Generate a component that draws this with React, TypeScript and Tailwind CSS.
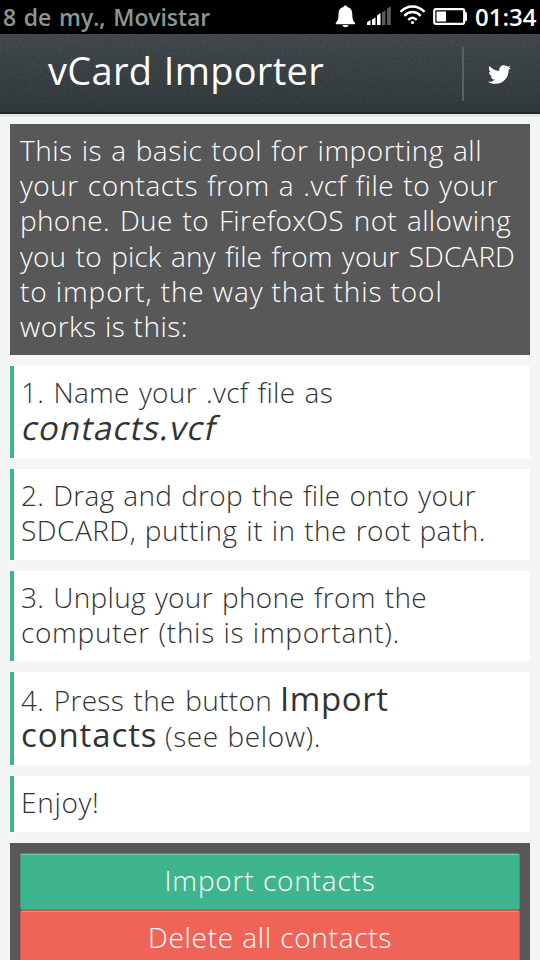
import type { ReactNode } from "react";
import { FaTwitter } from "react-icons/fa";

function Line({ className = "", children }: { className?: string; children: ReactNode }) {
  return (
    <span className={`block h-[35.2px] whitespace-nowrap [text-align-last:justify] ${className}`}>
      {children}
    </span>
  );
}

function Step({ className, children }: { className: string; children: ReactNode }) {
  return (
    <li className={`border-l-4 border-[#3fb58e] bg-white pl-[7px] pt-[9px] text-[#333333] shadow-[0_1px_0_#f8f9f9] ${className}`}>
      {children}
    </li>
  );
}

function StatusBar() {
  return (
    <div className="flex h-[34px] shrink-0 items-center bg-black font-semibold">
      <span className="ml-[3px] w-[207px] whitespace-nowrap text-[23px] leading-[32px] tracking-[-0.1px] text-[#8b9696] [text-align-last:justify]">
        8 de my., Movistar
      </span>
      <svg className="ml-[124px]" width="98" height="34" viewBox="334 0 98 34">
        <path d="M345.400 5.500c-1 0-1.700.6-1.900 1.500-3.800.9-5 3.800-5 7.500 0 4-.6 6-2.300 7.800-.8.800-.8 2 .4 2h17.600c1.200 0 1.200-1.200.4-2-1.700-1.800-2.300-3.800-2.300-7.800 0-3.700-1.200-6.600-5-7.500-.2-.9-.9-1.500-1.900-1.500z" fill="#fff" />
        <path d="M342.500 25h6c-.4 1.500-1.600 2.200-3 2.200s-2.600-.7-3-2.200z" fill="#fff" />
        <path d="M367 22.200l3.500-2.200v5H367zM372 19.600l3.500-2.200V25H372zM377 15.500l3.500-2.500V25H377z" fill="#fff" />
        <path d="M382 12.500l3.500-2.300V25H382zM387 8.700l3.800-2.500V25H387z" fill="#5a5a5a" />
        <g fill="none" stroke="#fff" strokeWidth="2.400">
          <path d="M400.500 11.800c7-7 17-7 24 0" />
          <path d="M404.300 15.800c5-5 11.400-5 16.400 0" />
          <path d="M408.300 19.800c2.600-2.600 5.800-2.600 8.400 0" />
        </g>
        <circle cx="412.500" cy="22.500" r="1.600" fill="#fff" />
      </svg>
      <svg width="36" height="34" viewBox="432 0 36 34">
        <rect x="434.200" y="9.200" width="30" height="14.600" rx="1.800" fill="none" stroke="#fff" strokeWidth="2.200" />
        <path d="M465 12h.8q1.200 0 1.200 1.500v6q0 1.500-1.200 1.500H465z" fill="#fff" />
        <rect x="436.500" y="11.500" width="9.500" height="10" fill="#fff" />
      </svg>
      <span className="ml-[7px] w-[62px] text-[24px] leading-[34px] text-white">01:34</span>
    </div>
  );
}

function Header() {
  return (
    <header className="relative flex h-[80px] shrink-0 items-start border-b-2 border-[#20282a] bg-gradient-to-b from-[#434b50] to-[#333b3e]">
      <svg className="absolute inset-0 opacity-10" width="540" height="78">
        <filter id="grain" x="0" y="0" width="1" height="1">
          <feTurbulence type="fractalNoise" baseFrequency="0.45" numOctaves="2" seed="4" />
          <feColorMatrix values="0 0 0 0 0  0 0 0 0 0  0 0 0 0 0  2.5 0 0 0 -0.9" />
        </filter>
        <rect width="540" height="78" filter="url(#grain)" />
      </svg>
      <h1 className="relative ml-[48px] w-[276px] whitespace-nowrap text-[38px] leading-[73px] tracking-[0.3px] text-white [text-align-last:justify]">
        vCard Importer
      </h1>
      <div className="relative ml-[138px] mt-[13px] h-[54px] w-[2px] bg-[#596164]" />
      <FaTwitter className="relative ml-[24px] mt-[29px] size-[23px] text-white" />
    </header>
  );
}

export default function App() {
  return (
    <div className='flex h-[960px] w-[540px] flex-col overflow-hidden bg-[#f4f6f5] font-["Open_Sans","Noto_Sans",sans-serif]'>
      <StatusBar />
      <Header />
      <div className="h-[3px] shrink-0 bg-[#e6e8e7]" />
      <main className="mx-[10px] mt-[7px] text-[28px] font-light leading-[35.2px] tracking-[0.25px]">
        <div className="h-[231px] bg-[#585858] pl-[10px] pt-[9px] text-white">
          <Line className="w-[462px] tracking-[0.5px]">This is a basic tool for importing all</Line>
          <Line className="w-[478px] tracking-[0.5px]">your contacts from a .vcf file to your</Line>
          <Line className="w-[491px] tracking-[0.3px]">phone. Due to FirefoxOS not allowing</Line>
          <Line className="w-[495px] tracking-[0.1px]">you to pick any file from your SDCARD</Line>
          <Line className="w-[422px] tracking-[0.9px]">to import, the way that this tool</Line>
          <Line className="w-[168px] tracking-[0.5px]">works is this:</Line>
        </div>
        <ol>
          <Step className="mt-[11px] h-[92px]">
            <Line className="w-[312px] tracking-[0.3px]">1. Name your .vcf file as</Line>
            <em className="ml-[2px] block w-[195px] origin-center -skew-x-12 text-[33px] font-normal not-italic leading-[35px] tracking-[1.1px]">
              contacts.vcf
            </em>
          </Step>
          <Step className="mt-[11px] h-[91px]">
            <Line className="w-[455px]">2. Drag and drop the file onto your</Line>
            <Line className="w-[465px] tracking-[0.5px]">SDCARD, putting it in the root path.</Line>
          </Step>
          <Step className="mt-[11px] h-[90px]">
            <Line className="w-[406px] tracking-[0.3px]">3. Unplug your phone from the</Line>
            <Line className="w-[379px] tracking-[0.7px]">computer (this is important).</Line>
          </Step>
          <Step className="mt-[11px] h-[93px]">
            <div className="flex h-[36px] items-baseline">
              <Line className="w-[251px] tracking-[0.3px]">4. Press the button</Line>
              <strong className="ml-[8px] text-[33px] font-normal leading-[35px] tracking-[0.6px]">Import</strong>
            </div>
            <div className="flex h-[36px] items-baseline">
              <strong className="w-[144px] text-[33px] font-normal leading-[35px] tracking-[0.9px]">contacts</strong>
              <Line className="w-[156px] tracking-[0.6px]">(see below).</Line>
            </div>
          </Step>
          <Step className="mt-[11px] h-[56px] tracking-[0.7px]">Enjoy!</Step>
        </ol>
        <div className="mt-[11px] h-[130px] bg-[#585858] p-[10px] text-white">
          <button className="flex h-[57px] w-full justify-center rounded-[2px] border border-[#369a79] bg-[#3fb58e] pt-[9px] shadow-[inset_0_1px_0_#6cc9aa]">
            <Line className="w-[211px] tracking-[0.8px]">Import contacts</Line>
          </button>
          <button className="flex h-[57px] w-full justify-center rounded-[2px] border border-[#cb564a] bg-[#ee6558] pt-[9px] shadow-[inset_0_1px_0_#f58a80]">
            <Line className="w-[244px] tracking-[0.7px]">Delete all contacts</Line>
          </button>
        </div>
      </main>
    </div>
  );
}
